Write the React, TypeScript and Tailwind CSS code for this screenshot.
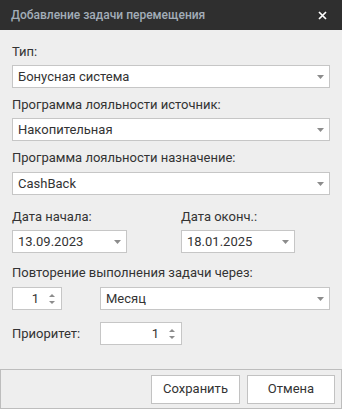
import React from "react";

const font = { fontFamily: 'Roboto, "Noto Sans", sans-serif' };

function Caret() {
  return (
    <svg width="7" height="4" viewBox="0 0 7 4" className="shrink-0">
      <path d="M0 0h7L3.5 4z" fill="#8c8c8c" />
    </svg>
  );
}

function Select({ value, className = "" }: { value: string; className?: string }) {
  return (
    <div
      className={`h-[23px] bg-white border border-[#c6c6c6] flex items-center justify-between pl-[5px] pr-[5px] text-[13px] text-[#333] ${className}`}
    >
      <span>{value}</span>
      <Caret />
    </div>
  );
}

function Spin({ value, className = "" }: { value: string; className?: string }) {
  return (
    <div
      className={`h-[23px] bg-white border border-[#c6c6c6] flex items-center justify-end pr-[6px] text-[13px] text-[#333] ${className}`}
    >
      <span className="mr-[10px]">{value}</span>
      <div className="flex flex-col gap-[4px]">
        <svg width="6" height="3" viewBox="0 0 6 3">
          <path d="M0 3h6L3 0z" fill="#8c8c8c" />
        </svg>
        <svg width="6" height="3" viewBox="0 0 6 3">
          <path d="M0 0h6L3 3z" fill="#8c8c8c" />
        </svg>
      </div>
    </div>
  );
}

function Label({ children, className = "" }: { children: React.ReactNode; className?: string }) {
  return <div className={`text-[13px] leading-[18px] text-[#333] ${className}`}>{children}</div>;
}

export default function App() {
  return (
    <div className="w-[342px] h-[409px] bg-[#eeeeee] flex flex-col" style={font}>
      <div className="h-[30px] bg-[#2f2f2f] flex items-center justify-between pl-[11px] pr-[15px]">
        <span className="text-[12px] font-medium text-[#a3adb8]">Добавление задачи перемещения</span>
        <svg width="9" height="9" viewBox="0 0 9 9">
          <path d="M1 1l7 7M8 1l-7 7" stroke="#fff" strokeWidth="1.7" />
        </svg>
      </div>

      <div className="flex-1 px-[12px] pt-[13px]">
        <Label>Тип:</Label>
        <Select value="Бонусная система" className="mt-[4px]" />

        <Label className="mt-[8px]">Программа лояльности источник:</Label>
        <Select value="Накопительная" className="mt-[4px]" />

        <Label className="mt-[8px]">Программа лояльности назначение:</Label>
        <Select value="CashBack" className="mt-[5px]" />

        <div className="mt-[13px] flex">
          <div className="w-[169px]">
            <Label>Дата начала:</Label>
            <Select value="13.09.2023" className="mt-[4px] w-[115px]" />
          </div>
          <div>
            <Label>Дата оконч.:</Label>
            <Select value="18.01.2025" className="mt-[4px] w-[114px]" />
          </div>
        </div>

        <Label className="mt-[11px]">Повторение выполнения задачи через:</Label>
        <div className="mt-[5px] flex gap-[38px]">
          <Spin value="1" className="w-[50px]" />
          <Select value="Месяц" className="flex-1" />
        </div>

        <div className="mt-[12px] flex items-center">
          <Label className="w-[88px]">Приоритет:</Label>
          <Spin value="1" className="w-[82px] h-[22px]" />
        </div>
      </div>

      <div className="h-[40px] border border-[#bdbdbd] flex items-center justify-end gap-[7px] pr-[6px]">
        <button className="w-[89px] h-[29px] bg-white border border-[#c2c2c2] text-[13px] text-[#333]">
          Сохранить
        </button>
        <button className="w-[88px] h-[29px] bg-white border border-[#c2c2c2] text-[13px] text-[#333]">
          Отмена
        </button>
      </div>
    </div>
  );
}
